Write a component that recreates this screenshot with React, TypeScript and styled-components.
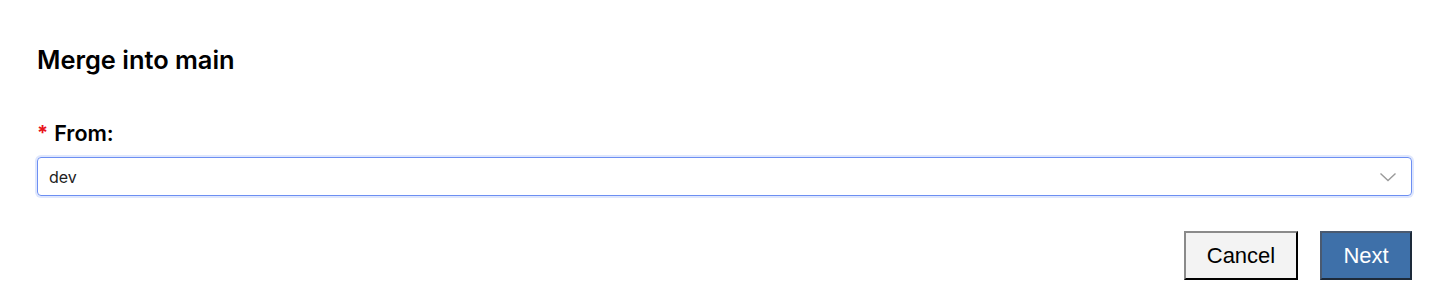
import React from 'react'
import styled, { createGlobalStyle } from 'styled-components'

const GlobalStyle = createGlobalStyle`
  html, body {
    margin: 0;
    padding: 0;
    background: #ffffff;
  }
`

const Dialog = styled.div`
  padding: 43px 38px 0 37px;
  font-family: Inter, 'Noto Sans', sans-serif;
  color: #000;
`

const Title = styled.h2`
  margin: 0;
  font-size: 25.4px;
  line-height: 34px;
  font-weight: 600;
`

const Field = styled.div`
  margin-top: 43px;
  display: flex;
  flex-direction: column;
  gap: 11px;
`

const Label = styled.label`
  display: flex;
  align-items: center;
  gap: 6px;
  font-size: 21.5px;
  line-height: 26px;
  font-weight: 600;
`

const Required = styled.span`
  color: #e8141c;
  font-size: 20px;
  font-weight: 700;
`

const SelectBox = styled.div`
  position: relative;
  height: 39px;
  box-sizing: border-box;
  border: 1px solid #6d8ff2;
  border-radius: 4px;
  box-shadow: 0 0 0 2px #dfe7fd;
  display: flex;
  align-items: center;
  padding: 0 11px;
  font-size: 16px;
  color: #222;
`

const Chevron = styled.svg`
  margin-left: auto;
  margin-right: 3px;
`

const Actions = styled.div`
  margin-top: 35px;
  display: flex;
  justify-content: flex-end;
  gap: 22px;
`

const Button = styled.button<{ $primary?: boolean }>`
  height: 49px;
  box-sizing: border-box;
  padding: 0;
  font-family: 'Liberation Sans', Arial, sans-serif;
  font-size: 22px;
  border-width: 2px;
  border-style: solid;
  border-color: ${(p) => (p.$primary ? '#4a5a70 #1d2a3a #1d2a3a #4a5a70' : '#8a8a8a #000 #000 #8a8a8a')};
  background: ${(p) => (p.$primary ? '#3e70a9' : '#f3f3f3')};
  color: ${(p) => (p.$primary ? '#ffffff' : '#000000')};
  width: ${(p) => (p.$primary ? '92px' : '114px')};
`

export default function App() {
  return (
    <>
      <GlobalStyle />
      <Dialog>
        <Title>Merge into main</Title>
        <Field>
          <Label>
            <Required>*</Required>From:
          </Label>
          <SelectBox>
            dev
            <Chevron width="18" height="12" viewBox="0 0 18 12">
              <path d="M1.5 2.5 L9 9.5 L16.5 2.5" fill="none" stroke="#9a9a9a" strokeWidth="1.4" />
            </Chevron>
          </SelectBox>
        </Field>
        <Actions>
          <Button>Cancel</Button>
          <Button $primary>Next</Button>
        </Actions>
      </Dialog>
    </>
  )
}
